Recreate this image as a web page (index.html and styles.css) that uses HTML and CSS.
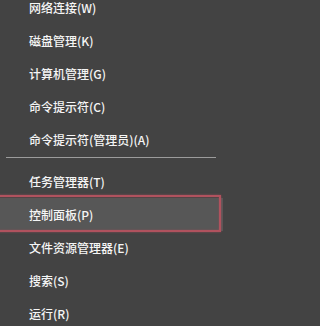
FILE: index.html
```html
<!DOCTYPE html>
<html lang="zh-CN">
<head>
<meta charset="utf-8">
<link rel="stylesheet" href="styles.css">
</head>
<body>
<div class="menu">
  <div class="group">
    <div class="item">网络连接(W)</div>
    <div class="item">磁盘管理(K)</div>
    <div class="item">计算机管理(G)</div>
    <div class="item">命令提示符(C)</div>
    <div class="item">命令提示符(管理员)(A)</div>
  </div>
  <div class="sep"></div>
  <div class="group">
    <div class="item">任务管理器(T)</div>
    <div class="item active">控制面板(P)</div>
    <div class="item">文件资源管理器(E)</div>
    <div class="item">搜索(S)</div>
    <div class="item">运行(R)</div>
  </div>
</div>
</body>
</html>
```
FILE: styles.css
```css
html, body {
  margin: 0;
  padding: 0;
  background: #434343;
  overflow: hidden;
}
body {
  width: 223px;
  height: 326px;
  font-family: "Noto Sans CJK SC", "Noto Sans", sans-serif;
  font-size: 12px;
  font-weight: 500;
  color: #f5f5f5;
}
.menu {
  margin-top: -9.5px;
  display: flex;
  flex-direction: column;
}
.group {
  display: flex;
  flex-direction: column;
}
.item {
  position: relative;
  height: 33px;
  line-height: 33px;
  padding-left: 29px;
  white-space: nowrap;
}
.sep {
  height: 1px;
  margin: 1.5px 7px 7px 6px;
  background: #9c9c9c;
}
.item.active {
  background: #575757;
}
.item.active::after {
  content: "";
  position: absolute;
  left: -4px;
  right: 2px;
  top: -3px;
  bottom: -1px;
  border: 2px solid #b0525e;
  box-shadow: 0 0 2px rgba(190, 80, 95, 0.6), inset 0 0 2px rgba(190, 80, 95, 0.5);
}
```
